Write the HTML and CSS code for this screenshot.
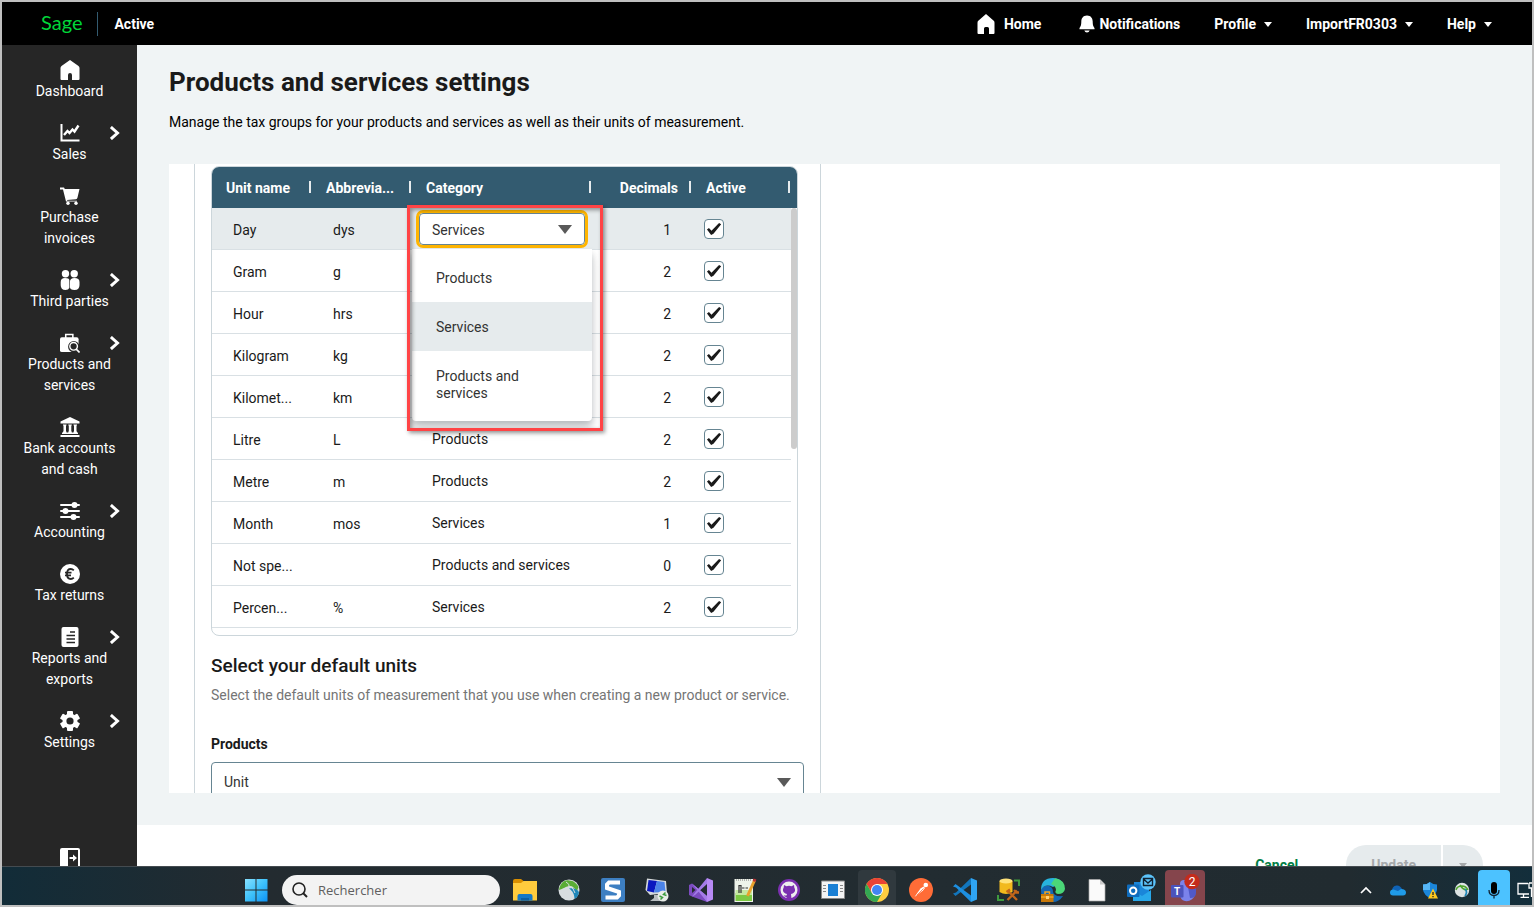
FILE: index.html
```html
<!DOCTYPE html>
<html lang="en">
<head>
    <meta charset="UTF-8">
    <meta name="viewport" content="width=device-width, initial-scale=1.0">
    <title>Products and services settings</title>
    <link rel="stylesheet" href="styles.css">
</head>
<body>
<div class="screen">

    <!-- Top bar -->
    <header class="topbar">
        <a class="logo" href="#">Sage</a>
        <span class="product-name">Active</span>
        <nav class="top-nav">
            <a class="home" href="#">
                <svg width="20" height="22" viewBox="0 0 20 22"><path fill="#fff" d="M10 1 L18 8 Q18.500 8.500 18.500 10 V20 Q18.500 21 17.500 21 H13 V15.500 Q13 14 11.500 14 H9.500 Q8 14 8 15.500 V21 H2.500 Q1.500 21 1.500 20 V10 Q1.500 8.500 2 8 Z"/></svg>
                Home
            </a>
            <a class="notifications" href="#">
                <svg width="16" height="18" viewBox="0 0 16 18"><path fill="#fff" d="M8 0.500 C4 0.500 2.300 3.500 2.300 6.500 C2.300 10.500 1.500 11.500 .5 13 V14.300 H15.500 V13 C14.500 11.500 13.700 10.500 13.700 6.500 C13.700 3.500 12 .5 8 .5 Z M5.300 15.400 H10.700 Q10 17.500 8 17.500 Q6 17.500 5.300 15.400 Z"/></svg>
                Notifications
            </a>
            <button type="button">Profile <span class="caret"></span></button>
            <button type="button">ImportFR0303 <span class="caret"></span></button>
            <button type="button">Help <span class="caret"></span></button>
        </nav>
    </header>

    <div class="app">

        <!-- Side menu -->
        <nav class="sidebar">
            <a href="#">
                <svg class="icon" viewBox="0 0 20 20"><path fill="#fff" d="M10 0 L18.500 6 Q19.500 7 19.500 8 V19 Q19.500 20 18.500 20 H12 V15 Q12 13 10 13 Q8 13 8 15 V20 H1.500 Q.5 20 .5 19 V8 Q.5 7 1.500 6 Z"/></svg>
                <span>Dashboard</span>
            </a>
            <a href="#">
                <svg class="icon" viewBox="0 0 20 20"><path fill="none" stroke="#fff" stroke-width="2" d="M1.500 1 V17.500 H19.500"/><path fill="none" stroke="#fff" stroke-width="2.400" d="M4 12 L7.500 8 L9.500 10 L12.500 6.500 L14.500 8.500 L18.500 2.500"/></svg>
                <span>Sales</span>
                <svg class="chevron" viewBox="0 0 10 14"><path d="M2 2 L7.500 7 L2 12"/></svg>
            </a>
            <a href="#">
                <svg class="icon" viewBox="0 0 20 20"><path fill="#fff" d="M0 1.500 H4 L4.800 3 H19.500 L17.500 11.500 Q17.200 13 16 13.300 L7 14 L7.300 14.700 H17 V15.500 H6 L3 3.500 H0 Z"/><circle cx="8" cy="17.200" r="1.700" fill="#fff"/><circle cx="16" cy="17.200" r="1.700" fill="#fff"/></svg>
                <span>Purchase invoices</span>
            </a>
            <a href="#">
                <svg class="icon" viewBox="0 0 20 20"><g fill="#fff"><circle cx="5.500" cy="3.700" r="3.700"/><circle cx="14.200" cy="3.700" r="3.700"/><path d="M.7 12 Q.7 8 5 8 Q9.300 8 9.300 10 V18 Q8.500 20 5.500 20 Q.7 20 .7 15 Z"/><path d="M9.900 12 Q9.900 8 14.500 8 Q19.500 8 19.500 12 V15 Q19.500 20 14.500 20 Q9.900 20 9.900 17 Z"/></g></svg>
                <span>Third parties</span>
                <svg class="chevron" viewBox="0 0 10 14"><path d="M2 2 L7.500 7 L2 12"/></svg>
            </a>
            <a href="#">
                <svg class="icon" viewBox="0 0 21 20"><path fill="none" stroke="#fff" stroke-width="1.600" d="M6 5 V1 H13.500 V5"/><rect y="4" width="19.500" height="15.500" rx="2" fill="#fff"/><circle cx="14.500" cy="14" r="6" fill="#262626"/><path fill="none" stroke="#262626" stroke-width="5" d="M17 16 L21 20"/><circle cx="14.300" cy="13.500" r="4" fill="none" stroke="#fff" stroke-width="1.500"/><path fill="none" stroke="#fff" stroke-width="1.700" d="M17 16.500 L20.500 20"/></svg>
                <span>Products and services</span>
                <svg class="chevron" viewBox="0 0 10 14"><path d="M2 2 L7.500 7 L2 12"/></svg>
            </a>
            <a href="#">
                <svg class="icon" viewBox="0 0 20 20"><path fill="#fff" d="M10 0 L19.500 4.500 V6.500 H.5 V4.500 Z M.5 18 H19.500 V20 H.5 Z M2 15.500 H18 V17 H2 Z M3 7.500 H6.500 V8.500 H6 V14.500 H6.500 V15.500 H3 V14.500 H3.500 V8.500 H3 Z M8.300 7.500 H11.800 V8.500 H11.300 V14.500 H11.800 V15.500 H8.300 V14.500 H8.800 V8.500 H8.300 Z M13.500 7.500 H17 V8.500 H16.500 V14.500 H17 V15.500 H13.500 V14.500 H14 V8.500 H13.500 Z"/></svg>
                <span>Bank accounts and cash</span>
            </a>
            <a href="#">
                <svg class="icon" viewBox="0 0 20 20"><path stroke="#fff" stroke-width="2" stroke-linecap="round" d="M1 4 H19 M1 10 H19 M1 16 H19"/><g fill="#fff"><circle cx="14.500" cy="4" r="3"/><circle cx="5.500" cy="10" r="3"/><circle cx="13.500" cy="16" r="3"/></g></svg>
                <span>Accounting</span>
                <svg class="chevron" viewBox="0 0 10 14"><path d="M2 2 L7.500 7 L2 12"/></svg>
            </a>
            <a href="#">
                <svg class="icon" viewBox="0 0 20 20"><circle cx="10" cy="10" r="10" fill="#fff"/><path fill="none" stroke="#262626" stroke-width="1.800" d="M13.800 6.300 Q12.500 5 10.800 5 Q7 5 7 10 Q7 15 10.800 15 Q12.500 15 13.800 13.700 M5 8.700 H11.500 M5 11.300 H11"/></svg>
                <span>Tax returns</span>
            </a>
            <a href="#">
                <svg class="icon" viewBox="0 0 20 20"><rect x="1.500" width="17" height="20" rx="2" fill="#fff"/><path stroke="#262626" stroke-width="1.400" d="M10 5 H15 M6.500 8.500 H15 M6.500 12 H15 M6.500 15.500 H15"/></svg>
                <span>Reports and exports</span>
                <svg class="chevron" viewBox="0 0 10 14"><path d="M2 2 L7.500 7 L2 12"/></svg>
            </a>
            <a href="#">
                <svg class="icon" viewBox="0 0 20 20"><g fill="#fff"><circle cx="10" cy="10" r="7.500"/><rect id="tooth" x="7" y="0" width="6" height="20" rx="1"/><use href="#tooth" transform="rotate(60 10 10)"/><use href="#tooth" transform="rotate(120 10 10)"/></g><circle cx="10" cy="10" r="3.600" fill="#262626"/></svg>
                <span>Settings</span>
                <svg class="chevron" viewBox="0 0 10 14"><path d="M2 2 L7.500 7 L2 12"/></svg>
            </a>
            <button type="button" class="collapse" aria-label="Collapse menu">
                <svg width="20" height="20" viewBox="0 0 20 20"><rect x="1" y="1" width="18" height="18" rx="1" fill="none" stroke="#fff" stroke-width="2"/><path fill="#fff" d="M1 1 H8 V19 H1 Z M9.500 9 H13 V6.500 L17 10 L13 13.500 V11 H9.500 Z"/></svg>
            </button>
        </nav>

        <!-- Page -->
        <main class="main">
            <div class="content">
                <h1>Products and services settings</h1>
                <p class="intro">Manage the tax groups for your products and services as well as their units of measurement.</p>

                <div class="panel">
                    <section class="card">
                        <div class="grid">
                            <table>
                                <colgroup>
                                    <col class="col-name"><col class="col-abbr"><col class="col-cat"><col class="col-dec"><col class="col-active">
                                </colgroup>
                                <thead>
                                    <tr>
                                        <th>Unit name</th>
                                        <th>Abbrevia...</th>
                                        <th>Category</th>
                                        <th class="num">Decimals</th>
                                        <th>Active</th>
                                    </tr>
                                </thead>
                                <tbody>
                                    <tr class="selected">
                                        <td>Day</td>
                                        <td>dys</td>
                                        <td class="editing">
                                            <div class="select-box focused">
                                                <select aria-label="Category">
                                                    <option>Products</option>
                                                    <option selected>Services</option>
                                                    <option>Products and services</option>
                                                </select>
                                            </div>
                                            <ul class="menu">
                                                <li>Products</li>
                                                <li class="current">Services</li>
                                                <li>Products and services</li>
                                            </ul>
                                            <div class="highlight"></div>
                                        </td>
                                        <td class="num">1</td>
                                        <td><input type="checkbox" aria-label="Day active" checked></td>
                                    </tr>
                                    <tr>
                                        <td>Gram</td><td>g</td><td></td><td class="num">2</td>
                                        <td><input type="checkbox" aria-label="Gram active" checked></td>
                                    </tr>
                                    <tr>
                                        <td>Hour</td><td>hrs</td><td></td><td class="num">2</td>
                                        <td><input type="checkbox" aria-label="Hour active" checked></td>
                                    </tr>
                                    <tr>
                                        <td>Kilogram</td><td>kg</td><td></td><td class="num">2</td>
                                        <td><input type="checkbox" aria-label="Kilogram active" checked></td>
                                    </tr>
                                    <tr>
                                        <td>Kilomet...</td><td>km</td><td></td><td class="num">2</td>
                                        <td><input type="checkbox" aria-label="Kilometre active" checked></td>
                                    </tr>
                                    <tr>
                                        <td>Litre</td><td>L</td><td>Products</td><td class="num">2</td>
                                        <td><input type="checkbox" aria-label="Litre active" checked></td>
                                    </tr>
                                    <tr>
                                        <td>Metre</td><td>m</td><td>Products</td><td class="num">2</td>
                                        <td><input type="checkbox" aria-label="Metre active" checked></td>
                                    </tr>
                                    <tr>
                                        <td>Month</td><td>mos</td><td>Services</td><td class="num">1</td>
                                        <td><input type="checkbox" aria-label="Month active" checked></td>
                                    </tr>
                                    <tr>
                                        <td>Not spe...</td><td></td><td>Products and services</td><td class="num">0</td>
                                        <td><input type="checkbox" aria-label="Not specified active" checked></td>
                                    </tr>
                                    <tr>
                                        <td>Percen...</td><td>%</td><td>Services</td><td class="num">2</td>
                                        <td><input type="checkbox" aria-label="Percentage active" checked></td>
                                    </tr>
                                </tbody>
                            </table>
                            <div class="scroll-track"><div class="scroll-thumb"></div></div>
                        </div>

                        <h2>Select your default units</h2>
                        <p class="hint">Select the default units of measurement that you use when creating a new product or service.</p>
                        <label for="default-product-unit">Products</label>
                        <div class="select-box">
                            <select id="default-product-unit">
                                <option>Unit</option>
                            </select>
                        </div>
                    </section>
                </div>
            </div>

            <footer class="actions">
                <button type="button" class="cancel">Cancel</button>
                <div class="split">
                    <button type="button" disabled>Update</button>
                    <button type="button" class="more" aria-label="More actions" disabled><span class="caret"></span></button>
                </div>
            </footer>
        </main>
    </div>

    <!-- Windows taskbar -->
    <div class="taskbar">
        <button type="button" class="slot" aria-label="Start">
            <svg width="24" height="24" viewBox="0 0 24 24">
                <defs><linearGradient id="win" x1="0" y1="0" x2="24" y2="24" gradientUnits="userSpaceOnUse"><stop offset="0" stop-color="#8fe3ff"/><stop offset=".5" stop-color="#3fc2fb"/><stop offset="1" stop-color="#0a90f5"/></linearGradient></defs>
                <path fill="url(#win)" d="M1 1 H11.500 V11.500 H1 Z M12.500 1 H23.500 V11.500 H12.500 Z M1 12.500 H11.500 V23.500 H1 Z M12.500 12.500 H23.500 V23.500 H12.500 Z"/>
            </svg>
        </button>
        <div class="search">
            <svg width="18" height="18" viewBox="0 0 18 18"><circle cx="8" cy="8" r="6" fill="none" stroke="#222" stroke-width="1.600"/><path stroke="#222" stroke-width="2" d="M12 12 L16 16"/></svg>
            <input type="text" placeholder="Rechercher" aria-label="Rechercher">
        </div>
        <button type="button" class="slot" aria-label="Files">
            <svg width="26" height="24" viewBox="0 0 26 24"><path fill="#d98e00" d="M1 3 Q1 1 3 1 H9 L11.500 3 V6 H1 Z"/><path fill="#ffcb3d" d="M1 5 H9 L11.500 3 H25 V22.500 H1 Z"/><path fill="#1478c8" d="M5.500 22.500 V18 Q5.500 16 7.500 16 H18.500 Q20.500 16 20.500 18 V22.500 Z"/><path fill="#0b5fa5" d="M9 20 H17 V22.500 H9 Z"/></svg>
        </button>
        <button type="button" class="slot" aria-label="Remote client">
            <svg width="24" height="24" viewBox="0 0 24 24"><circle cx="12" cy="12" r="10.500" fill="#d8dde0"/><path fill="#5aad35" d="M2 12 C3 6 7 1.500 12 2.500 C17 2.500 20 6 21.500 9 L20 13 C17 10 16 8 13 8 C9 8 6 11 2 12 Z"/><path fill="#1e86b8" d="M15 10 C20 11 22 13 22 15 Q21 19 17.500 21 C17.500 17 16 13 12 10.500 Z"/><path fill="none" stroke="#d8dde0" stroke-width="1" d="M9 4 Q13 6 12 9 M12 8 Q17 10 18 15"/></svg>
        </button>
        <button type="button" class="slot" aria-label="Snagit">
            <svg width="24" height="24" viewBox="0 0 24 24"><rect width="24" height="24" rx="2" fill="#3d7fc2"/><path fill="none" stroke="#fff" stroke-width="4" d="M19 4.500 H8 L6 6.500 V10 L18 14 V17.500 L16 19.500 H4.500"/></svg>
        </button>
        <button type="button" class="slot" aria-label="Remote desktop">
            <svg width="24" height="24" viewBox="0 0 24 24"><path fill="#d5d9dc" d="M2 .5 L21 3 L22 15 L5 17 L.5 12 Z"/><path fill="#0a18c0" d="M3.500 2 L12 3 L9 14.500 L2 13 Z"/><path fill="#4b83e8" d="M12 3 L19.500 4 L20.500 14 L9 14.500 Z"/><path fill="#b8bdc0" d="M9 17 H14 V20 L18 23 H5 L9 20 Z"/><circle cx="18" cy="18" r="5.500" fill="#e8ece8"/><path fill="none" stroke="#3d9c3d" stroke-width="1.500" d="M14.500 18 L17.500 19.500 L15.500 21.500 M21.500 17.500 L18.500 16.500 L20.500 14.500"/></svg>
        </button>
        <button type="button" class="slot" aria-label="Visual Studio">
            <svg width="24" height="24" viewBox="0 0 24 24"><path fill="#7c4bc0" d="M0 7 L3 5.500 L18 18 V24 L3 18.500 L0 17 Z"/><path fill="#262b30" d="M3 9 L6.500 12 L3 15 Z"/><path fill="#a47be8" d="M3 18.500 L18 0 V6 L6 17 Z M3 5.500 L18 18 V24 Z"/><path fill="#b88af5" d="M18 0 L24 2.500 V21.500 L18 24 Z"/></svg>
        </button>
        <button type="button" class="slot" aria-label="Notepad++">
            <svg width="24" height="24" viewBox="0 0 24 24"><path fill="#eef3ea" d="M1.500 1 H20 V24 H1.500 Z"/><path fill="#7cc943" d="M2.500 15 H19 V23 H2.500 Z"/><path fill="#c5e8a0" d="M2.500 12 H19 V17 H2.500 Z"/><path fill="none" stroke="#333" stroke-width="1.200" d="M6 15 V7.500 H8 V15 M9 10 H11.500 M12.500 10 H15"/><path stroke="#777" d="M3 2 H19" stroke-dasharray="1 1"/><path stroke="#e8a12c" stroke-width="3" d="M21.500 2.500 L14.500 18"/><path stroke="#b33" stroke-width="3" d="M22 1 L21 3.500"/></svg>
        </button>
        <button type="button" class="slot" aria-label="GitHub Desktop">
            <svg width="24" height="24" viewBox="0 0 24 24"><circle cx="12" cy="12" r="11" fill="#7b2fb0"/><circle cx="12" cy="12" r="8.500" fill="#eee"/><path fill="#7b2fb0" d="M7 7 L9.500 8.200 Q12 7.500 14.500 8.200 L17 7 L17.300 9.500 Q19 12.500 17 14.500 Q15.800 15.800 14 16 L14.500 21 H9.500 V19 Q7.500 19.200 6.500 17 Q8 17.800 9.500 17.500 L10 16 Q8.200 15.800 7 14.500 Q5 12.500 6.700 9.500 Z"/></svg>
        </button>
        <button type="button" class="slot" aria-label="Virtual machine">
            <svg width="24" height="20" viewBox="0 0 24 20"><path fill="#f4f4f4" stroke="#888" d="M.5 1 H23.500 V18.500 H.5 Z"/><path stroke="#888" d="M2 5.500 H5 M2 8.500 H5 M2 11.500 H5 M19 5.500 H22 M19 8.500 H22 M19 11.500 H22"/><rect x="7" y="4" width="10" height="12" fill="#1a7fd4"/></svg>
        </button>
        <button type="button" class="slot open" aria-label="Chrome">
            <svg width="24" height="24" viewBox="0 0 24 24"><circle cx="12" cy="12" r="12" fill="#ffcd40"/><path fill="#ea4335" d="M1.600 6 A12 12 0 0 1 22.400 6 L12 6 L6.800 15 Z"/><path fill="#34a853" d="M1.600 6 A12 12 0 0 0 12 24 L17.200 15 L6.800 15 Z"/><circle cx="12" cy="12" r="6" fill="#fff"/><circle cx="12" cy="12" r="5" fill="#4285f4"/></svg>
        </button>
        <button type="button" class="slot" aria-label="Postman">
            <svg width="24" height="24" viewBox="0 0 24 24"><circle cx="12" cy="12" r="12" fill="#ff6c37"/><path fill="#fff" d="M5.500 19 L11.500 10.500 L14.500 8.500 L16 10 L14 12.500 Z"/><circle cx="16.800" cy="7" r="2.300" fill="#fff"/><path stroke="#ff6c37" stroke-width=".8" d="M8 17 L14.500 10.500"/></svg>
        </button>
        <button type="button" class="slot" aria-label="Visual Studio Code">
            <svg width="24" height="24" viewBox="0 0 24 24"><path fill="#1276bd" d="M18 0 L3 14.500 L0 15.500 L2.500 18 L18 6.500 Z"/><path fill="#1d8fe0" d="M18 24 L3 9.500 L0 8.500 L2.500 6 L18 17.500 Z"/><path fill="#2fa4f2" d="M18 0 L24 2.500 V21.500 L18 24 Z"/></svg>
        </button>
        <button type="button" class="slot" aria-label="Database tools">
            <svg width="24" height="24" viewBox="0 0 24 24"><path fill="none" stroke="#3f9a3f" stroke-width="2" d="M17 2.500 H22 V8 M1 17 V22 H7"/><path fill="#f2b91d" d="M2.500 3 V14 Q9 18 15.500 14 V3 Z"/><ellipse cx="9" cy="3" rx="6.500" ry="2.500" fill="#ffe27a"/><path fill="none" stroke="#c2661a" stroke-width="2.400" d="M10.500 22 L20 12.500 M11 13 L20 22 M9.500 14 L13 11.500 M17 12 L19.500 14.500 H22"/></svg>
        </button>
        <button type="button" class="slot" aria-label="Edge">
            <svg width="24" height="24" viewBox="0 0 24 24"><path fill="#1467b5" d="M0 12 Q2 7 8 8 Q12 9 12 14 Q13 19 22 18 Q18 24 12 24 Q0 24 0 12 Z"/><path fill="#27b3dd" d="M0 12 Q0 0 12 0 Q18 0 21 4 Q16 7 12 9 Q4 5 0 12 Z"/><path fill="#4bd678" d="M14 .3 Q24 2 24 11 Q23 16 17 16 Q13 15 15 12 Q15 8 10 6 Z"/><path fill="#c87808" d="M0 16 H12.500 V24 H0 Z"/><path fill="none" stroke="#f4a620" stroke-width="1.500" d="M4 16 V14 H8.500 V16 M0 19 H12.500"/><rect x="5" y="18" width="3" height="3" fill="#ffd27a"/></svg>
        </button>
        <button type="button" class="slot" aria-label="Document">
            <svg width="18" height="24" viewBox="0 0 18 24"><path fill="#fafafa" stroke="#aaa" stroke-width=".7" d="M1 1.500 H12 L17 6.500 V23 H1 Z"/><path fill="#ccc" d="M12 1.500 L17 6.500 H12 Z"/></svg>
        </button>
        <button type="button" class="slot" aria-label="Outlook">
            <svg width="30" height="32" viewBox="0 0 30 32"><path fill="#1a86d9" d="M8 8 H23 V27 H8 Z"/><path fill="#28a8ea" d="M7 16 L16 22 L25 16 V27 H7 Z"/><rect x="1" y="10.500" width="12.500" height="12.500" rx="1" fill="#0f6cbd"/><circle cx="7.200" cy="16.700" r="3.200" fill="none" stroke="#fff" stroke-width="2"/><circle cx="22" cy="8" r="7.700" fill="#5cc4fb"/><path fill="none" stroke="#123" stroke-width="1.400" d="M17.500 4.500 H26.500 V11.500 H17.500 Z M17.500 5 L22 9 L26.500 5"/></svg>
        </button>
        <button type="button" class="slot alert" aria-label="Teams, 2 notifications">
            <svg width="30" height="32" viewBox="0 0 30 32"><circle cx="14" cy="10" r="4" fill="#7b83eb"/><path fill="#7b83eb" d="M10 13 H25 V21 Q22 28 15 27 Q10 26 10 20 Z"/><path fill="#5059c9" d="M18 13 H26 V19 Q26 24 20 24 Z"/><rect x="1" y="11" width="12.500" height="12.500" rx="1" fill="#4b53bc"/><text x="7" y="21" text-anchor="middle" font-size="10" font-weight="700" fill="#fff">T</text><circle cx="22" cy="7.500" r="7.700" fill="#c42b1c"/><text x="22" y="12" text-anchor="middle" font-size="12" fill="#fff">2</text></svg>
        </button>

        <div class="tray">
            <button type="button" class="tray-slot" aria-label="Show hidden icons">
                <svg width="12" height="8" viewBox="0 0 12 8"><path fill="none" stroke="#fff" stroke-width="1.700" d="M1 7 L6 2 L11 7"/></svg>
            </button>
            <button type="button" class="tray-slot" aria-label="OneDrive">
                <svg width="16" height="11" viewBox="0 0 16 11"><path fill="#0f62b5" d="M2 6 Q2 1 6.500 .5 Q10 0 12 4 L8 9 H3 Z"/><path fill="#1f9be8" d="M3 10.500 Q0 10.500 0 7.500 Q0 4.500 3.500 4.500 L8 6 L11 4 Q16 4 16 7.500 Q16 10.500 13 10.500 Z"/></svg>
            </button>
            <button type="button" class="tray-slot" aria-label="Windows Security">
                <svg width="16" height="17" viewBox="0 0 16 17"><path fill="#1b86da" d="M8 0 Q11 2.500 15 2.500 V8 Q14 13 8 16 Q2 13 1 8 V2.500 Q5 2.500 8 0 Z"/><path fill="#56b6f5" d="M8 0 V8 H1 V2.500 Q5 2.500 8 0 Z"/><path fill="#ffc81e" d="M11 6.500 L16 16.500 H6 Z"/><path stroke="#222" stroke-width="1.300" d="M11 10 V13 M11 14 V15.300"/></svg>
            </button>
            <button type="button" class="tray-slot" aria-label="Remote client status">
                <svg width="16" height="16" viewBox="0 0 16 16"><circle cx="8" cy="8" r="7.200" fill="#dde3e4"/><path fill="none" stroke="#4fa52e" stroke-width="1.500" d="M2 8 Q3 4 8 4 Q12 4 14 8 M6 3 Q9 8 13 8"/><path fill="none" stroke="#1e86b8" stroke-width="1.700" d="M11 7 Q14 10 11 14"/></svg>
            </button>
            <button type="button" class="tray-slot mic" aria-label="Microphone in use">
                <svg width="12" height="17" viewBox="0 0 12 17"><rect x="3" width="6" height="12" rx="3" fill="#000"/><path fill="none" stroke="#123" stroke-width="1.300" d="M1 8 Q1 13.500 6 13.500 Q11 13.500 11 8 M6 13.500 V16.500"/></svg>
            </button>
            <button type="button" class="tray-slot network" aria-label="Network">
                <svg width="18" height="18" viewBox="0 0 18 18"><path fill="none" stroke="#fff" stroke-width="1.300" d="M11 2.500 H1 V13 H12 M6.500 13 V16 M3.500 16.300 H12 M12 2 H18 M12 2 V7 H18 M14.500 7 V16"/></svg>
            </button>
        </div>
    </div>
</div>
</body>
</html>
```
FILE: styles.css
```css
/* General page styling */
* {
    box-sizing: border-box;
}

body {
    margin: 0;
    font-family: Roboto, "Liberation Sans", sans-serif;
    font-size: 14px;
    line-height: 21px;
    color: #1a1a1a;
}

button, select, input {
    font: inherit;
    color: inherit;
    margin: 0;
}

button {
    padding: 0;
    border: none;
    background: none;
}

a {
    color: inherit;
    text-decoration: none;
}

svg {
    display: block;
    flex: none;
}

.screen {
    display: flex;
    flex-direction: column;
    height: 100vh;
    border: 2px solid #bfbfbf;
    overflow: hidden;
}

/* Top bar */
.topbar {
    display: flex;
    flex: none;
    align-items: center;
    height: 43px;
    padding: 1px 40px 0 39px;
    background: #000;
    color: #fff;
    font-weight: 700;
}

.logo {
    padding: 0 15px 4px 0;
    border-right: 1px solid #335b70;
    color: #00d639;
    font-family: Lato, sans-serif;
    font-size: 20px;
    font-weight: 400;
    line-height: 20px;
}

.product-name {
    margin-left: 16px;
}

.top-nav {
    display: flex;
    align-items: center;
    gap: 34px;
    margin-left: auto;
}

.top-nav a, .top-nav button {
    display: flex;
    align-items: center;
}

.home {
    gap: 8px;
    margin-right: 4px;
}

.notifications {
    gap: 4px;
}

.caret {
    margin-left: 8px;
    border: 4px solid transparent;
    border-top: 5px solid currentColor;
    border-bottom: 0;
}

.app {
    display: flex;
    flex: 1;
    min-height: 0;
}

/* Side menu */
.sidebar {
    display: flex;
    flex: none;
    flex-direction: column;
    gap: 21px;
    width: 135px;
    padding-top: 15px;
    background: #262626;
    color: #fff;
    text-align: center;
}

.sidebar a {
    position: relative;
    padding: 0 20px;
}

.sidebar .icon {
    width: 20px;
    height: 20px;
    margin: 0 auto 1px;
}

.chevron {
    position: absolute;
    top: 3px;
    right: 17px;
    width: 10px;
    height: 14px;
    fill: none;
    stroke: #fff;
    stroke-width: 3;
    stroke-linecap: square;
}

.collapse {
    height: 18px;
    margin: auto auto 0;
    overflow: hidden;
}

/* Main page */
.main {
    display: flex;
    flex: 1;
    flex-direction: column;
    min-width: 0;
    background: #f0f4f5;
}

.content {
    display: flex;
    flex: 1;
    flex-direction: column;
    min-height: 0;
    padding: 22px 32px 32px;
}

h1 {
    margin: 0 0 15px;
    font-size: 26px;
    line-height: 30px;
}

.intro {
    margin: 0 0 31px;
    color: #000;
}

.panel {
    flex: 1;
    min-height: 0;
    overflow: hidden;
    background: #fff;
}

.card {
    width: 627px;
    min-height: 100%;
    margin-left: 25px;
    padding: 2px 16px 32px;
    border: 1px solid #ccd6db;
    border-width: 0 1px;
}

/* Units table */
.grid {
    position: relative;
    width: 587px;
    height: 470px;
    border: 1px solid #ccd6db;
    border-radius: 8px;
}

table {
    width: 100%;
    table-layout: fixed;
    border-collapse: separate;
    border-spacing: 0;
}

.col-name, .col-abbr, .col-dec {
    width: 100px;
}

.col-cat {
    width: 180px;
}

th {
    position: relative;
    height: 41px;
    padding: 2px 14px 0;
    background: #335b70;
    color: #fff;
    text-align: left;
    white-space: nowrap;
}

th:first-child {
    border-top-left-radius: 7px;
}

th:last-child {
    border-top-right-radius: 7px;
}

/* Column resize handle */
th::after {
    content: "";
    position: absolute;
    top: 14px;
    right: 1px;
    width: 2px;
    height: 12px;
    background: #e6ebed;
}

th:last-child::after {
    right: 7px;
}

td {
    height: 42px;
    padding: 4px 0 0 21px;
    border-bottom: 1px solid #d9e0e4;
    white-space: nowrap;
}

td:nth-child(3) {
    padding: 2px 0 0 20px;
}

td:last-child {
    padding: 0 0 0 12px;
}

th.num {
    text-align: right;
}

td.num {
    padding: 4px 21px 0 0;
    text-align: right;
}

.selected td {
    background: #e6ebed;
}

input[type="checkbox"] {
    display: block;
    appearance: none;
    width: 20px;
    height: 20px;
    border: 1px solid #668592;
    border-radius: 4px;
    background: #fff;
}

input[type="checkbox"]:checked::before {
    content: "";
    display: block;
    width: 18px;
    height: 18px;
    background: #1a1a1a;
    clip-path: polygon(11% 55%, 22% 47%, 36% 62%, 78% 20%, 90% 27%, 47% 79%, 34% 86%);
}

.scroll-track {
    position: absolute;
    top: 41px;
    right: 0;
    bottom: 6px;
    width: 6px;
    background: #fff;
}

.scroll-thumb {
    height: 241px;
    border-radius: 3px;
    background: #ccc;
}

/* Drop-downs */
.select-box {
    position: relative;
}

.select-box::after {
    content: "";
    position: absolute;
    top: 50%;
    right: 13px;
    margin-top: -4px;
    border: 7px solid transparent;
    border-top: 9px solid #595959;
    border-bottom: 0;
    pointer-events: none;
}

.select-box select {
    display: block;
    appearance: none;
    width: 100%;
    height: 40px;
    padding: 0 12px;
    border: 1px solid #668592;
    border-radius: 4px;
    background: #fff;
    color: #333;
}

.select-box.focused select {
    height: 32px;
    padding-top: 3px;
    outline: 3px solid #ffb500;
}

.selected .editing {
    position: relative;
    z-index: 2;
    padding: 0 7px;
}

.menu {
    position: absolute;
    top: 41px;
    left: 0;
    width: 180px;
    margin: 0;
    padding: 4px 0;
    border-radius: 0 0 4px 4px;
    background: #fff;
    box-shadow: 0 5px 6px rgba(0, 20, 30, 0.2), 0 8px 14px rgba(0, 20, 30, 0.1);
    color: #333;
    list-style: none;
    line-height: 17px;
    white-space: normal;
}

.menu li {
    padding: 17px 40px 15px 24px;
}

.menu .current {
    background: #e6ebed;
}

.highlight {
    position: absolute;
    top: -3px;
    left: -5px;
    width: 196px;
    height: 226px;
    border: 3px solid #ff4345;
    box-shadow: 2px 2px 4px rgba(0, 0, 0, 0.4), inset 2px 2px 4px rgba(0, 0, 0, 0.4);
    pointer-events: none;
}

/* Default units */
h2 {
    margin: 18px 0 7px;
    font-size: 19px;
    font-weight: 500;
    line-height: 24px;
}

.hint {
    margin: 0 0 28px;
    color: #757575;
}

label {
    display: block;
    margin-bottom: 7px;
    font-weight: 700;
}

/* Bottom actions */
.actions {
    display: flex;
    flex: none;
    justify-content: flex-end;
    gap: 48px;
    height: 41px;
    padding: 20px 49px 0 0;
    overflow: hidden;
    background: #fff;
    font-weight: 700;
}

.actions button {
    height: 40px;
}

.cancel {
    color: #007e45;
}

.split {
    display: flex;
    gap: 2px;
    color: #a6a9ab;
}

.split button {
    padding: 0 25px;
    border-radius: 20px 0 0 20px;
    background: #e6ebed;
}

.split .more {
    padding: 0 16px;
    border-radius: 0 20px 20px 0;
}

.more .caret {
    display: block;
    margin: 0;
}

/* Taskbar */
.taskbar {
    display: flex;
    flex: none;
    height: 39px;
    padding-left: 232px;
    overflow: hidden;
    border-top: 1px solid #444b50;
    background: linear-gradient(90deg, #122c38, #232b30 16%, #222c31 60%, #212b30 88%, #132e3b);
}

.slot, .tray-slot {
    display: flex;
    flex: none;
    align-items: center;
    justify-content: center;
    width: 44px;
    height: 46px;
}

.search {
    display: flex;
    align-items: center;
    gap: 9px;
    width: 218px;
    height: 30px;
    margin: 8px 3px 0 4px;
    padding: 0 9px;
    border-radius: 15px;
    background: #f3f3f3;
}

.search input {
    width: 100%;
    padding: 0;
    border: none;
    background: none;
    font-family: "Open Sans", sans-serif;
    font-size: 13px;
}

.search input::placeholder {
    color: #5f5f5f;
}

.open {
    background: #30393e;
    border-radius: 4px 4px 0 0;
    width: 38px;
    height: 40px;
    margin: 3px 3px 0;
}

.alert {
    width: 40px;
    height: 40px;
    margin: 3px 2px 0;
    border-radius: 4px 4px 0 0;
    background: #85454c;
}

.tray {
    display: flex;
    margin-left: auto;
}

.tray-slot {
    width: 32px;
}

.mic {
    height: 40px;
    margin-top: 3px;
    border-radius: 4px 4px 0 0;
    background: #4cc2ff;
}

.network {
    justify-content: flex-start;
    width: 22px;
    padding-left: 7px;
    overflow: hidden;
}
```
